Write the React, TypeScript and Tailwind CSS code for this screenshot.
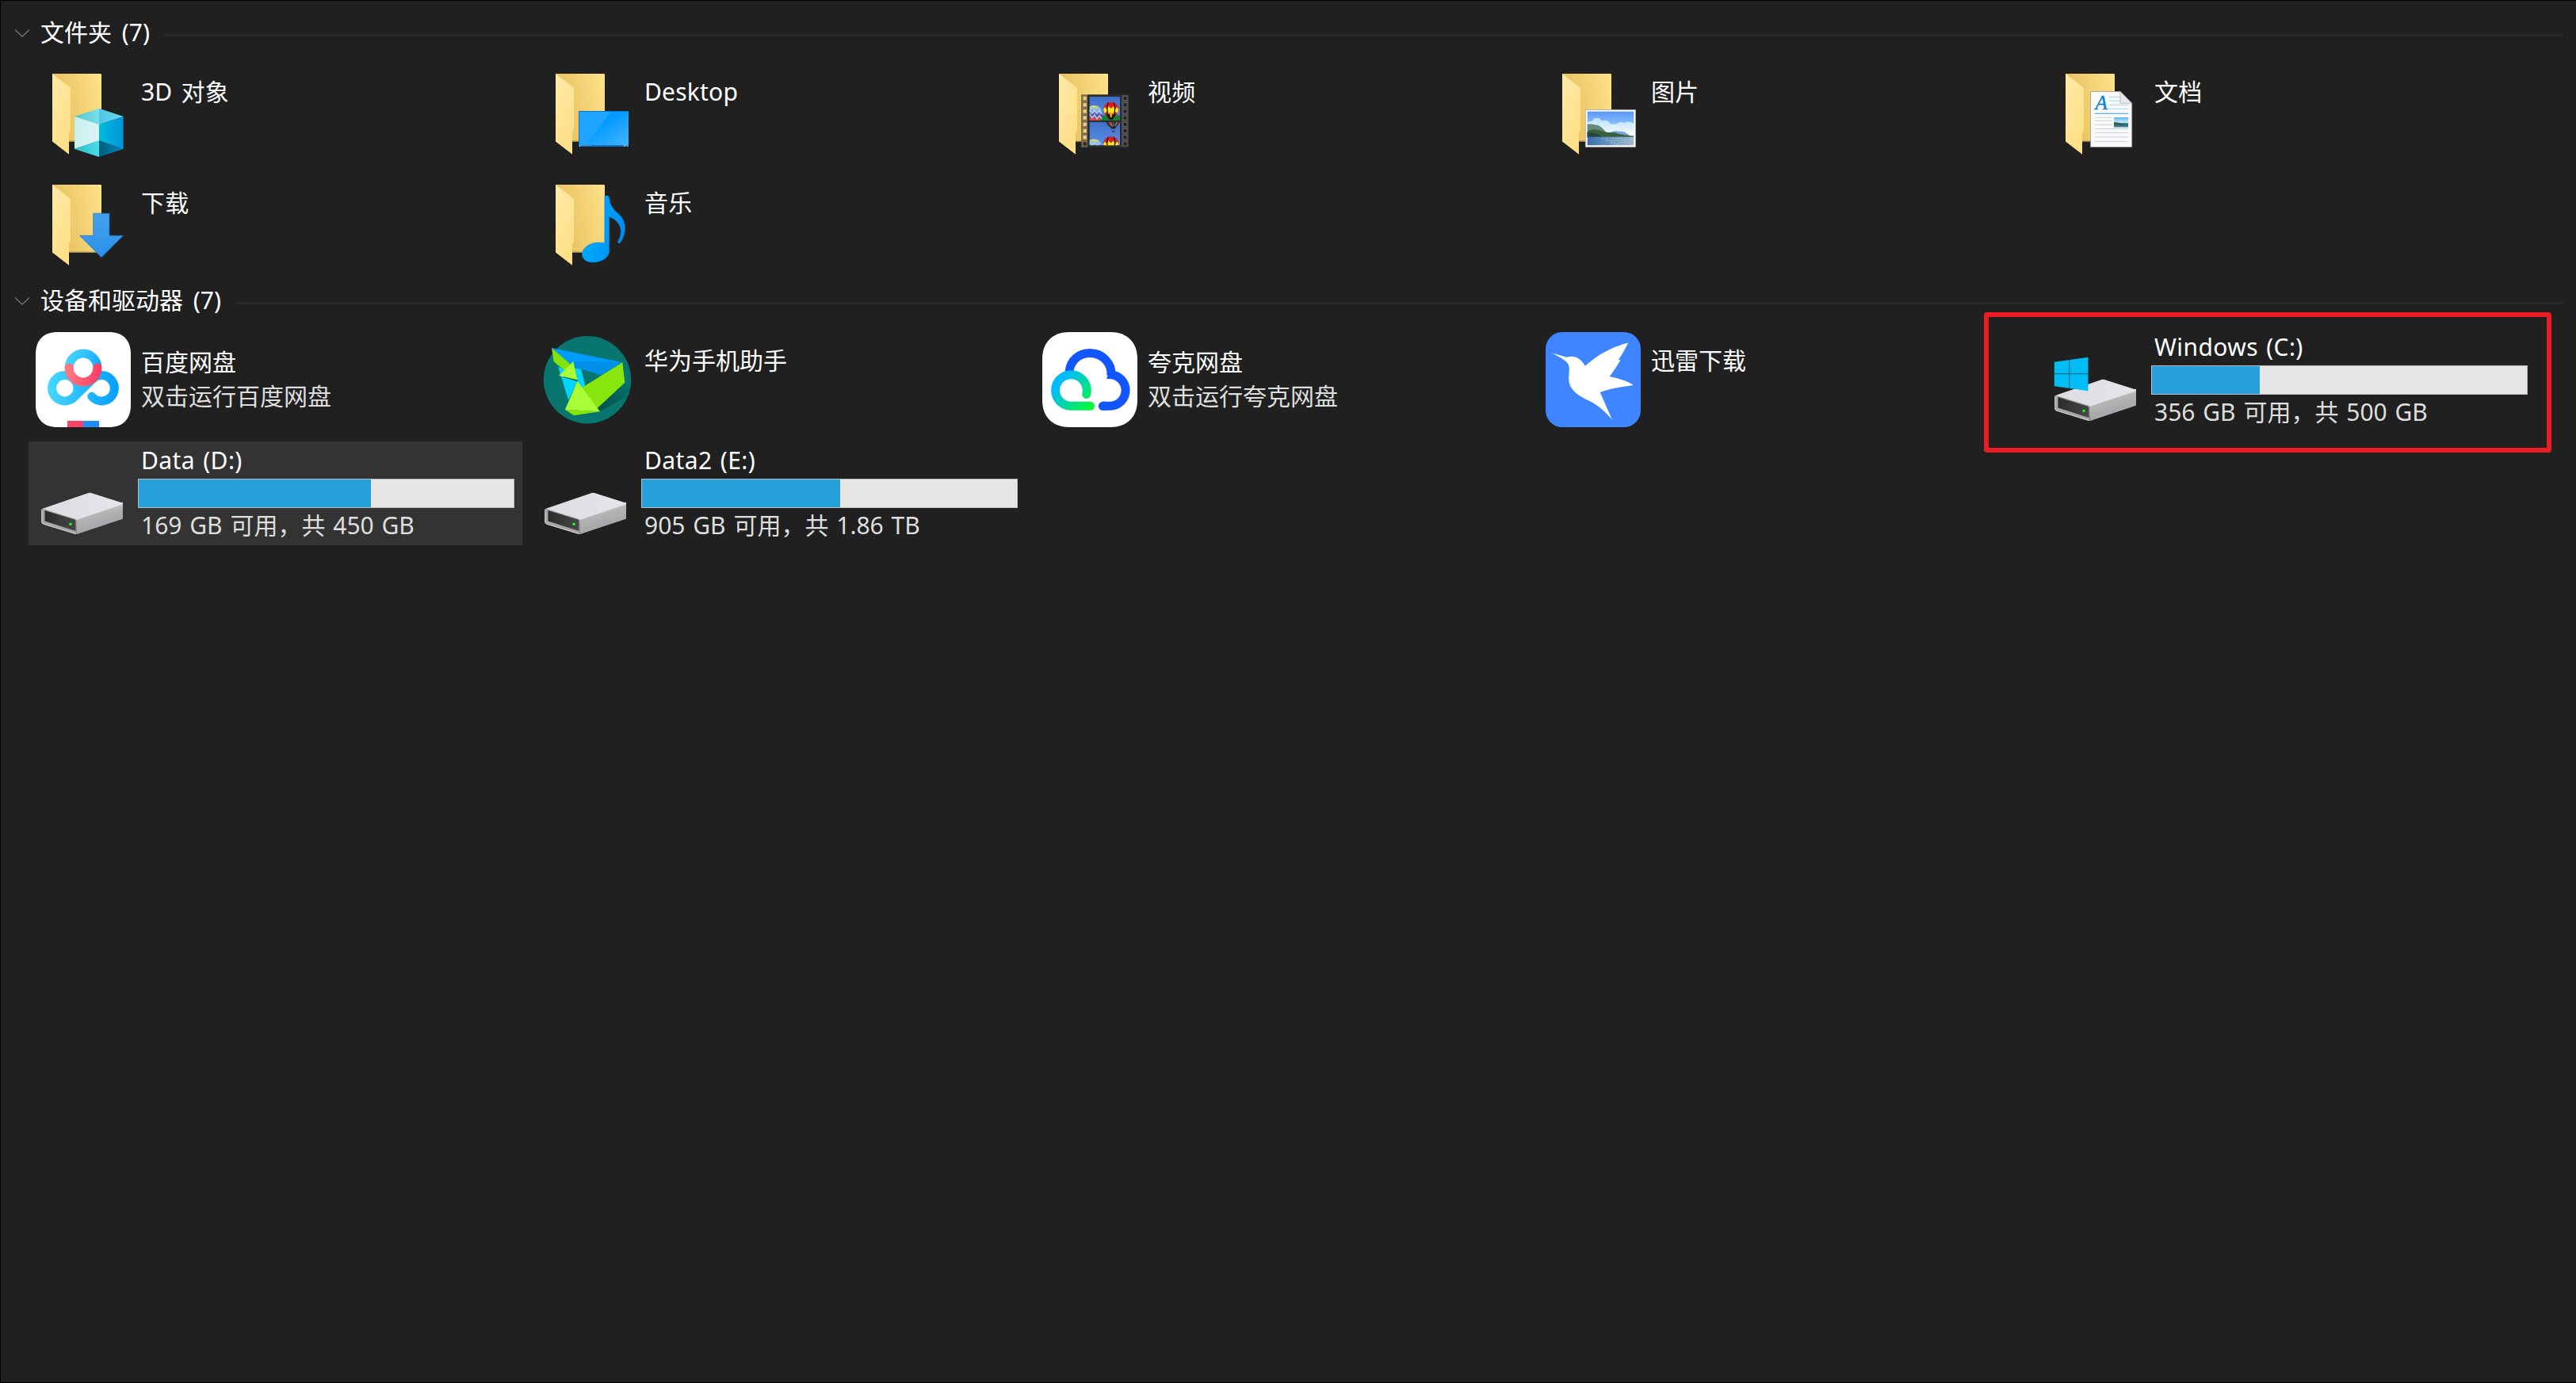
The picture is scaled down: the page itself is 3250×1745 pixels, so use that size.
import type { ReactNode } from "react";

function Folder({ children }: { children?: ReactNode }) {
  return (
    <svg viewBox="0 0 120 120" className="h-[120px] w-[120px] shrink-0">
      <defs>
        <linearGradient id="folderBack" x1="0" y1="0.3" x2="1" y2="0">
          <stop offset="0" stopColor="#e6c05e" />
          <stop offset="1" stopColor="#ffe28a" />
        </linearGradient>
        <linearGradient id="folderFront" x1="0" y1="0" x2="0.6" y2="1">
          <stop offset="0" stopColor="#ffeaa8" />
          <stop offset="1" stopColor="#ffdf87" />
        </linearGradient>
      </defs>
      <path d="M21 9H82.3L83 10V94.7H21Z" fill="url(#folderBack)" />
      <path d="M42 94.2H83" stroke="#8a7746" strokeWidth="1" />
      <path d="M21 9L44 26.7V80L42 84V110.7L21 94.5Z" fill="url(#folderFront)" />
      {children}
    </svg>
  );
}

function ObjectsIcon() {
  return (
    <Folder>
      <defs>
        <linearGradient id="cubeRight">
          <stop offset="0" stopColor="#00bcd8" />
          <stop offset="1" stopColor="#0095dc" />
        </linearGradient>
        <linearGradient id="cubeLeft">
          <stop offset="0" stopColor="#c6efec" />
          <stop offset="1" stopColor="#dcf4fa" />
        </linearGradient>
        <linearGradient id="cubeTop">
          <stop offset="0" stopColor="#52c6cf" />
          <stop offset="0.5" stopColor="#7adfe9" />
          <stop offset="0.5" stopColor="#4fc6e5" />
          <stop offset="1" stopColor="#6bd6f2" />
        </linearGradient>
        <linearGradient id="cubeBottomLeft">
          <stop offset="0" stopColor="#35c0c6" />
          <stop offset="1" stopColor="#45dbe8" />
        </linearGradient>
        <linearGradient id="cubeBottomRight">
          <stop offset="0" stopColor="#005e7d" />
          <stop offset="1" stopColor="#0086bd" />
        </linearGradient>
      </defs>
      <path d="M49 63L80 73V93.5L49 104Z" fill="url(#cubeLeft)" />
      <path d="M80 73L110.6 63V104L80 93.5Z" fill="url(#cubeRight)" />
      <path d="M80 52.7L110.6 63L80 73L49 63Z" fill="url(#cubeTop)" />
      <path d="M49 104L80 93.3V114Z" fill="url(#cubeBottomLeft)" />
      <path d="M110.6 104L80 93.3V114Z" fill="url(#cubeBottomRight)" />
    </Folder>
  );
}

function DownloadsIcon() {
  return (
    <Folder>
      <defs>
        <linearGradient id="arrow" x1="0" y1="0" x2="0" y2="1">
          <stop offset="0" stopColor="#45a0ea" />
          <stop offset="1" stopColor="#2b90ea" />
        </linearGradient>
      </defs>
      <path
        d="M72.7 45.2H93V73.2H110.5L83 100.8L55.5 73.2H72.7Z"
        fill="url(#arrow)"
        stroke="#1f6db5"
        strokeWidth="0.6"
      />
    </Folder>
  );
}

function DesktopIcon() {
  return (
    <Folder>
      <defs>
        <linearGradient id="screen" x1="0.4" y1="0.4" x2="1" y2="1">
          <stop offset="0" stopColor="#009bff" />
          <stop offset="1" stopColor="#45b2ff" />
        </linearGradient>
      </defs>
      <rect x="50" y="56" width="63" height="45" fill="#0a75c4" />
      <rect x="51" y="57" width="62" height="42" fill="url(#screen)" />
      <path d="M51 57H90.7L59.7 99H51Z" fill="#1fa5ff" />
      <path d="M51 99.5H66" stroke="#4e86ad" strokeWidth="1" />
      <path d="M51.5 99V101M107.5 99V101M109.5 99V100.5M112 99.5V101" stroke="#9bcdf0" strokeWidth="1" />
    </Folder>
  );
}

function MusicIcon() {
  return (
    <Folder>
      <defs>
        <linearGradient id="note" x1="0" y1="0.7" x2="1" y2="1">
          <stop offset="0" stopColor="#00acff" />
          <stop offset="1" stopColor="#0086f0" />
        </linearGradient>
      </defs>
      <path
        d="M82.8 25.2C82.8 22 88.2 22 88.6 25.6C89.8 35 93 39.5 99.5 45C112.5 56 109.5 72.5 102.6 82C101.2 84 98.6 82.6 99.7 80.7C107 67.5 103 55 88.7 49.5V92.5C88.7 101 79 107 67.5 107C58.5 107 54.5 101.5 54.5 97C54.5 88 66 79.5 82.8 82.5Z"
        fill="url(#note)"
        stroke="#0a7cd0"
        strokeWidth="0.5"
      />
    </Folder>
  );
}

const HOLES = [0, 1, 2, 3, 4, 5, 6, 7];

function Balloon({ x, y }: { x: number; y: number }) {
  return (
    <g transform={`translate(${x} ${y})`}>
      <path d="M-9.7 0C-9.7 -12.5 9.7 -12.5 9.7 0C9.7 4.5 5 9 2 13H-2C-5 9 -9.7 4.5 -9.7 0Z" fill="#d81f26" />
      <path d="M-9.7 0L-7.5 -3L-5.5 0L-3 -4L0 -1L3 -4L5.5 0L7.5 -3L9.7 0L8 5L5 2.5L3 6L0 3L-3 6L-5 2.5L-8 5Z" fill="#ffe81a" />
      <path d="M-3.5 -8.5C-6 -2 -5 5 -1.5 12M3.5 -8.5C6 -2 5 5 1.5 12" stroke="#201a10" strokeWidth="1.3" fill="none" />
      <path d="M-7 5.5L0 8L7 5.5L2 13H-2Z" fill="#1d1a12" />
      <path d="M-1 3H1L0.7 10H-0.7Z" fill="#ffe81a" />
    </g>
  );
}

function VideosIcon() {
  return (
    <Folder>
      <defs>
        <linearGradient id="sky" x1="0" y1="0" x2="0" y2="1">
          <stop offset="0" stopColor="#3f6fc4" />
          <stop offset="1" stopColor="#5a90ee" />
        </linearGradient>
        <linearGradient id="patchwork" x1="0" y1="0" x2="0" y2="1">
          <stop offset="0" stopColor="#f2df5c" />
          <stop offset="0.25" stopColor="#7fb8e8" />
          <stop offset="0.55" stopColor="#5b4fa8" />
          <stop offset="0.8" stopColor="#e03a4a" />
          <stop offset="1" stopColor="#f6a04a" />
        </linearGradient>
        <clipPath id="frameTop"><rect x="59.7" y="38" width="38.3" height="30" /></clipPath>
        <clipPath id="frameBottom"><rect x="59.7" y="70" width="38.3" height="29.3" /></clipPath>
      </defs>
      <rect x="49" y="35.3" width="9" height="66.7" fill="#6b6046" fillOpacity="0.85" />
      <rect x="57" y="35.3" width="52" height="66.7" fill="#2c2c2c" />
      <rect x="100" y="36" width="8.5" height="65" fill="#4a4a4a" />
      {HOLES.map((i) => (
        <g key={i}>
          <rect x="50.8" y={37.3 + i * 8.2} width="5.6" height="5.6" fill="#8a8065" />
          <rect x="51.7" y={38 + i * 8.2} width="4" height="4.2" fill={i === 7 ? "#222" : "#f0cf78"} />
          <rect x="101.6" y={37.3 + i * 8.2} width="5.6" height="5.6" fill="#6c6c6c" />
          <rect x="102.5" y={38 + i * 8.2} width="4" height="4.2" fill="#1f1f1f" />
        </g>
      ))}
      <g clipPath="url(#frameTop)">
        <rect x="59" y="38" width="40" height="31" fill="url(#sky)" />
        <path d="M59 61.5H99V69H59Z" fill="#15803a" />
        <ellipse cx="65" cy="60" rx="11" ry="11" fill="url(#patchwork)" />
        <path d="M57 59L60 55L63 59L66 55L69 59L72 55L75 60M57 64L60 60L63 65L66 61L69 66L72 62L75 66" stroke="#a9d3f5" strokeWidth="1.5" fill="none" />
        <Balloon x={86.7} y={54} />
      </g>
      <g clipPath="url(#frameBottom)">
        <rect x="59" y="69.5" width="40" height="30" fill="url(#sky)" />
        <path d="M80 69.5H98L95 74L91.5 78.5H87.5L83 74Z" fill="#26221c" />
        <path d="M83 69.5L87 75M87 69.5L89 76M96 69.5L92 75" stroke="#d8372a" strokeWidth="1.3" />
        <path d="M85 69.5L88 75M94 69.5L91.5 75" stroke="#3f9a44" strokeWidth="1.2" />
        <path d="M90 69.5V75.5" stroke="#2f4fd0" strokeWidth="1.6" />
        <rect x="88.3" y="80.7" width="3" height="2.2" fill="#5c3a22" />
        <ellipse cx="65" cy="102.5" rx="11" ry="11" fill="url(#patchwork)" />
        <path d="M57 99L60 96L63 99L66 96L69 99L72 97" stroke="#a9d3f5" strokeWidth="1.5" fill="none" />
        <Balloon x={86.7} y={97.5} />
      </g>
    </Folder>
  );
}

function PicturesIcon() {
  return (
    <Folder>
      <defs>
        <linearGradient id="photoSky" x1="0" y1="0" x2="0" y2="1">
          <stop offset="0" stopColor="#5a97f8" />
          <stop offset="0.35" stopColor="#86bbfb" />
          <stop offset="0.7" stopColor="#f2f9ff" />
        </linearGradient>
        <linearGradient id="cloud" x1="0" y1="0" x2="0" y2="1">
          <stop offset="0" stopColor="#b9e2ff" />
          <stop offset="1" stopColor="#ffffff" />
        </linearGradient>
        <linearGradient id="lake">
          <stop offset="0" stopColor="#3d6eae" />
          <stop offset="0.4" stopColor="#5e8fbe" />
          <stop offset="1" stopColor="#a2bccd" />
        </linearGradient>
      </defs>
      <rect x="50.3" y="54.5" width="63.2" height="47" fill="#fff" stroke="#a9a9a9" strokeWidth="0.8" />
      <rect x="52.7" y="56.7" width="58.6" height="42.6" fill="url(#photoSky)" />
      <path d="M52.7 71.5C54 68.5 57 69 58.5 69.5C60 63.5 68.5 63 70.7 68.5C75 66.5 80 68.5 81.5 72.5H90C92 69.5 97 69.5 98.5 71.5C103 68.5 109 70 111.3 72.5V88.7H52.7Z" fill="url(#cloud)" />
      <path d="M80 84C84 81 90 80.5 93 82C98 81 102 84 106 87H80Z" fill="#7ba3db" />
      <path d="M52.7 73C58 71.5 63 74 66 74C71 76 74 80 77 84L80 88.7H52.7Z" fill="#66897b" />
      <path d="M52.7 82C57 79 61 78.5 66 80C73 82 80 84 86 83C93 85 100 87 111.3 87.5V89H52.7Z" fill="#37613c" />
      <path d="M52.7 83C60 83 66 85 72 88.9H52.7Z" fill="#25453d" />
      <rect x="52.7" y="88.7" width="58.6" height="10.6" fill="url(#lake)" />
      <path d="M70 91H80M84 90.5H96M76 93.5H92M96 92.5H106M82 96H88M92 95.5H102M86 98H96" stroke="#b9cddb" strokeWidth="0.7" strokeDasharray="2 1.5" />
    </Folder>
  );
}

function DocumentsIcon() {
  return (
    <Folder>
      <defs>
        <linearGradient id="thumb" x1="0" y1="0" x2="0" y2="1">
          <stop offset="0" stopColor="#5fb4f5" />
          <stop offset="0.55" stopColor="#cdeafc" />
          <stop offset="0.56" stopColor="#4c8f78" />
          <stop offset="0.75" stopColor="#2f6a86" />
          <stop offset="1" stopColor="#3d8cc4" />
        </linearGradient>
      </defs>
      <path d="M52.6 31.5H90L104.7 46.5V101.5H52.6Z" fill="#f8fafc" stroke="#9a9a92" strokeWidth="0.8" />
      <path d="M90 31.5V46.3H104.7Z" fill="#e9e9e9" stroke="#a8a8a8" strokeWidth="0.7" />
      <text x="58.5" y="54" fontSize="25" fontStyle="italic" fontFamily="Liberation Serif, serif" fill="#0d83d0" stroke="#0d83d0" strokeWidth="0.4">
        A
      </text>
      <path d="M75.5 38.3H90M75.5 43.3H90M75.5 48.3H100M75.5 53.3H100" stroke="#a8d2ef" strokeWidth="1" />
      <path d="M57.5 59.3H100" stroke="#3f9bd8" strokeWidth="1.1" />
      <path d="M57.5 64.3H80M57.5 68.4H80M57.5 73.4H80M57.5 78.5H100M57.5 83.5H100M57.5 89H100M57.5 94.4H100" stroke="#cfd1d4" strokeWidth="1" />
      <rect x="82" y="64" width="18" height="12.6" fill="url(#thumb)" />
      <path d="M82 70.5C86 69.5 91 72 95 73.5L100 74H82Z" fill="#35604a" />
    </Folder>
  );
}

function BaiduIcon() {
  return (
    <svg viewBox="0 0 120 120" className="h-[120px] w-[120px] shrink-0">
      <defs>
        <linearGradient id="loop" gradientUnits="userSpaceOnUse" x1="15" y1="70" x2="105" y2="70">
          <stop offset="0" stopColor="#46d8ff" />
          <stop offset="1" stopColor="#069eff" />
        </linearGradient>
        <linearGradient id="crown" gradientUnits="userSpaceOnUse" x1="40" y1="30" x2="82" y2="45">
          <stop offset="0" stopColor="#46d8ff" />
          <stop offset="1" stopColor="#14a6ff" />
        </linearGradient>
        <linearGradient id="smile" gradientUnits="userSpaceOnUse" x1="38" y1="50" x2="82" y2="50">
          <stop offset="0" stopColor="#ff7a85" />
          <stop offset="1" stopColor="#ff3a63" />
        </linearGradient>
      </defs>
      <path d="M28 0H92C110 0 120 10 120 28V92C120 110 110 120 92 120H28C10 120 0 110 0 92V28C0 10 10 0 28 0Z" fill="#fff" />
      <g fill="none" strokeWidth="11" strokeLinecap="round">
        <path d="M71.8 59.2A16.2 16.2 0 1 1 70.8 81.3" stroke="url(#loop)" />
        <path d="M71.8 59.2L48.2 82.2A16.2 16.2 0 1 1 48.2 59.2" stroke="url(#loop)" />
        <path d="M48 59.1A16.2 16.2 0 0 1 48.2 82.2" stroke="url(#loop)" />
        <circle cx="60" cy="45" r="12.4" fill="#fff" stroke="none" />
        <path d="M42.1 45A17.9 17.9 0 0 1 77.9 45" stroke="url(#crown)" />
        <path d="M42.1 45A17.9 17.9 0 0 0 77.9 45" stroke="url(#smile)" />
      </g>
      <rect x="40" y="112" width="20" height="8" fill="#ff4366" />
      <rect x="60" y="112" width="20" height="8" fill="#1f8dff" />
    </svg>
  );
}

function HuaweiIcon() {
  return (
    <svg viewBox="0 0 120 120" className="h-[120px] w-[120px] shrink-0">
      <defs>
        <linearGradient id="fold" x1="0" y1="1" x2="1" y2="0">
          <stop offset="0" stopColor="#054f4b" />
          <stop offset="1" stopColor="#07736d" />
        </linearGradient>
      </defs>
      <circle cx="61" cy="60.8" r="55.2" fill="#181818" />
      <circle cx="61" cy="60.2" r="55.2" fill="#08756f" />
      <path d="M108 64L115.8 67.5L113 80L77 100.3L73.6 96Z" fill="url(#fold)" />
      <path d="M24.2 43.7L34 48L30 57L48.5 61.7L37.2 86Z" fill="#00d5ff" />
      <path d="M45.4 45L53.2 46.7L58.4 67.7L54 71L48.5 61.7Z" fill="#00d5ff" />
      <path d="M16 20L105.3 38.3L42.4 37.7L39.4 40.3Z" fill="#009bff" />
      <path d="M42.4 37L105.3 38.3L78.4 54.3L45 44Z" fill="#0090ea" />
      <path d="M16 20L39.4 40.3L33.7 49L24 42L18.5 36.7Z" fill="#85e30d" />
      <path d="M30 56L48.5 60L48.5 62.5Z" fill="#0b6b2a" />
      <path d="M43.3 37L48.5 60.3L25 55Z" fill="#a8ff38" />
      <path d="M105.3 38.3L108.3 63.7L73.6 96L54.1 70.3Z" fill="#88e60c" />
      <path d="M48.5 61.7L77 100.3L32.9 98Z" fill="#a8ff38" />
      <path d="M32.9 97.7L77 100.3L44 105.3Z" fill="#88e60c" />
    </svg>
  );
}

function QuarkIcon() {
  return (
    <svg viewBox="0 0 120 120" className="h-[120px] w-[120px] shrink-0">
      <defs>
        <linearGradient id="quark" gradientUnits="userSpaceOnUse" x1="22" y1="62" x2="62" y2="96">
          <stop offset="0" stopColor="#00baff" />
          <stop offset="1" stopColor="#05fb35" />
        </linearGradient>
      </defs>
      <path d="M34 0H86C107 0 120 13 120 34V86C120 107 107 120 86 120H34C13 120 0 107 0 86V34C0 13 13 0 34 0Z" fill="#fff" />
      <g fill="none" strokeWidth="11" strokeLinejoin="round">
        <path d="M34 50C35.5 35 47 26.5 60.3 26.5C76 26.5 88.5 40 86.8 55" stroke="#1156ff" />
        <path d="M76.3 93.3H84.5A19.8 19.8 0 0 0 86 53.7" stroke="#1156ff" />
        <path d="M76.3 93.3H78" stroke="#1156ff" strokeLinecap="round" />
        <path d="M84 51H87V58.9H81Z" fill="#1156ff" strokeWidth="0" />
        <path d="M60.5 93.3H36.3A19.8 19.8 0 1 1 56.2 73.5C56.3 75.5 56.2 76.5 55.7 78.5" stroke="url(#quark)" strokeLinecap="round" />
      </g>
    </svg>
  );
}

function XunleiIcon() {
  return (
    <svg viewBox="0 0 120 120" className="h-[120px] w-[120px] shrink-0">
      <rect width="120" height="120" rx="21" fill="#3f85ff" />
      <path
        d="M7.7 26.2L26.7 31.7C36 29 43 32 50 42.7C64 30 82 19 104.3 13.5C100 22 96 29 91.7 35.3L94.7 35C90 43 85.5 49.5 80.7 56.3C91 58 101 61 110 66.3L109.5 67.3C95 69 81 71.5 68.7 76L84 110.7C76 101 66 92 55 86.7C40 80 28.5 72 29.2 57C29.5 51 30.5 46 29 41.5C27 36 17 31 7.7 26.2Z"
        fill="#fff"
      />
    </svg>
  );
}

function DriveIcon({ system = false }: { system?: boolean }) {
  return (
    <svg viewBox="0 0 120 120" className="h-[120px] w-[120px] shrink-0">
      <defs>
        <linearGradient id="driveTop" x1="0" y1="0" x2="1" y2="0">
          <stop offset="0" stopColor="#dcdde0" />
          <stop offset="1" stopColor="#e6e6ea" />
        </linearGradient>
        <linearGradient id="driveSide" gradientUnits="userSpaceOnUse" x1="78" y1="80" x2="83" y2="97">
          <stop offset="0" stopColor="#dfe0e3" />
          <stop offset="0.35" stopColor="#b4b5b7" />
          <stop offset="1" stopColor="#a9aaac" />
        </linearGradient>
        <linearGradient id="driveFront" x1="0" y1="0" x2="1" y2="0">
          <stop offset="0" stopColor="#2b2b2b" />
          <stop offset="1" stopColor="#474747" />
        </linearGradient>
      </defs>
      <path d="M51 91L110 71.5V91.5Q110 92.5 109 93L52 112Z" fill="url(#driveSide)" />
      <path d="M8 80L66.5 60Q68.3 59.3 70 60L108.5 72.3Q111 73.5 108.5 74.5L51.5 94Z" fill="url(#driveTop)" />
      <path d="M7.3 81Q7.3 79.5 9 80L50 92.7Q51.7 93.5 51.7 95V112L50 112L9.5 99.5Q7.3 98.5 7.3 96.5Z" fill="#a5a5a5" />
      <path d="M7.8 81.5V97Q8 98.5 10 99.2L50.5 111.5" fill="none" stroke="#d9d9d9" strokeWidth="0.9" />
      <path d="M11.5 82L49 93.5Q50.5 94.2 50.5 95.5V108L11.5 95.5Z" fill="url(#driveFront)" />
      <circle cx="44" cy="99.3" r="2.3" fill="#127a18" />
      <circle cx="44" cy="99.3" r="1.5" fill="#3cff3c" />
      {system && (
        <g>
          <path d="M6.8 37.7L49.5 31.7V74.3L6.8 68.3Z" fill="#00bdf5" />
          <path d="M25.7 35V71M6.8 52.7H49.5" stroke="#0b6f92" strokeWidth="1.2" />
        </g>
      )}
    </svg>
  );
}

function Chevron() {
  return (
    <svg viewBox="0 0 20 12" className="h-3 w-5 shrink-0">
      <path d="M1 1.5L10 10L19 1.5" fill="none" stroke="#727272" strokeWidth="1.3" />
    </svg>
  );
}

function GroupHeader({ title }: { title: string }) {
  return (
    <div className="flex h-10 items-center pr-[17px] pl-[17px]">
      <Chevron />
      <h2 className="-mt-[3px] ml-[13px] text-[30px] leading-10 whitespace-pre text-white [word-spacing:5px]">{title}</h2>
      <div className="mt-1 ml-[18px] h-[3px] flex-1 bg-[#2b2b2b]" />
    </div>
  );
}

function FolderTile({ icon, name }: { icon: ReactNode; name: string }) {
  return (
    <div className="flex h-[131px] pt-[5px] pl-[9px]">
      {icon}
      <div className="mt-3 ml-[13px] text-[30px] leading-10 tracking-[0.2px] text-white [word-spacing:3px]">
        {name}
      </div>
    </div>
  );
}

function AppTile({ icon, name, detail }: { icon: ReactNode; name: string; detail?: string }) {
  return (
    <div className="flex h-[131px] pt-[5px] pl-[9px]">
      {icon}
      <div className={`ml-[13px] text-[30px] ${detail ? "pt-4" : "pt-3.5"}`}>
        <div className="leading-[43px] text-white">{name}</div>
        {detail && <div className="leading-[43px] text-[#dedede]">{detail}</div>}
      </div>
    </div>
  );
}

interface DriveProps {
  name: string;
  detail: string;
  used: number;
  system?: boolean;
  hovered?: boolean;
  marked?: boolean;
}

function DriveTile({ name, detail, used, system, hovered, marked }: DriveProps) {
  return (
    <div className={`relative flex h-[131px] pt-[5px] pl-[9px] ${hovered ? "bg-[#333333]" : ""}`}>
      <DriveIcon system={system} />
      <div className="ml-[9px] text-[30px]">
        <div className="pb-1 pl-1 leading-[38px] tracking-[0.4px] text-white [word-spacing:2px]">{name}</div>
        <div className="h-[37px] w-[475px] border border-[#bcbcbc] bg-[#e6e6e6]">
          <div className="h-full bg-[#26a0da]" style={{ width: `${used}%` }} />
        </div>
        <div className="pl-1 leading-[43px] text-[#dedede] [word-spacing:2px]">{detail}</div>
      </div>
      {marked && (
        <div className="absolute -top-5 -left-[73px] h-[177px] w-[716px] rounded-[4px] border-[6px] border-[#ed1c24]" />
      )}
    </div>
  );
}

export default function App() {
  return (
    <main className="h-[1745px] w-[3250px] overflow-hidden border-t border-b border-l border-black bg-[#202020] pt-[21px] font-['Noto_Sans','Noto_Sans_CJK_SC',sans-serif]">
      <GroupHeader title="文件夹 (7)" />
      <section className="mt-[17px] grid grid-cols-[repeat(5,623px)] gap-x-3 gap-y-[9px] pl-[35px]">
        <FolderTile icon={<ObjectsIcon />} name="3D 对象" />
        <FolderTile icon={<DesktopIcon />} name="Desktop" />
        <FolderTile icon={<VideosIcon />} name="视频" />
        <FolderTile icon={<PicturesIcon />} name="图片" />
        <FolderTile icon={<DocumentsIcon />} name="文档" />
        <FolderTile icon={<DownloadsIcon />} name="下载" />
        <FolderTile icon={<MusicIcon />} name="音乐" />
      </section>
      <div className="h-[10px]" />
      <GroupHeader title="设备和驱动器 (7)" />
      <section className="mt-[14px] grid grid-cols-[repeat(5,623px)] gap-3 pl-[35px]">
        <AppTile icon={<BaiduIcon />} name="百度网盘" detail="双击运行百度网盘" />
        <AppTile icon={<HuaweiIcon />} name="华为手机助手" />
        <AppTile icon={<QuarkIcon />} name="夸克网盘" detail="双击运行夸克网盘" />
        <AppTile icon={<XunleiIcon />} name="迅雷下载" />
        <DriveTile name="Windows (C:)" detail="356 GB 可用，共 500 GB" used={28.8} system marked />
        <DriveTile name="Data (D:)" detail="169 GB 可用，共 450 GB" used={61.9} hovered />
        <DriveTile name="Data2 (E:)" detail="905 GB 可用，共 1.86 TB" used={52.9} />
      </section>
    </main>
  );
}
